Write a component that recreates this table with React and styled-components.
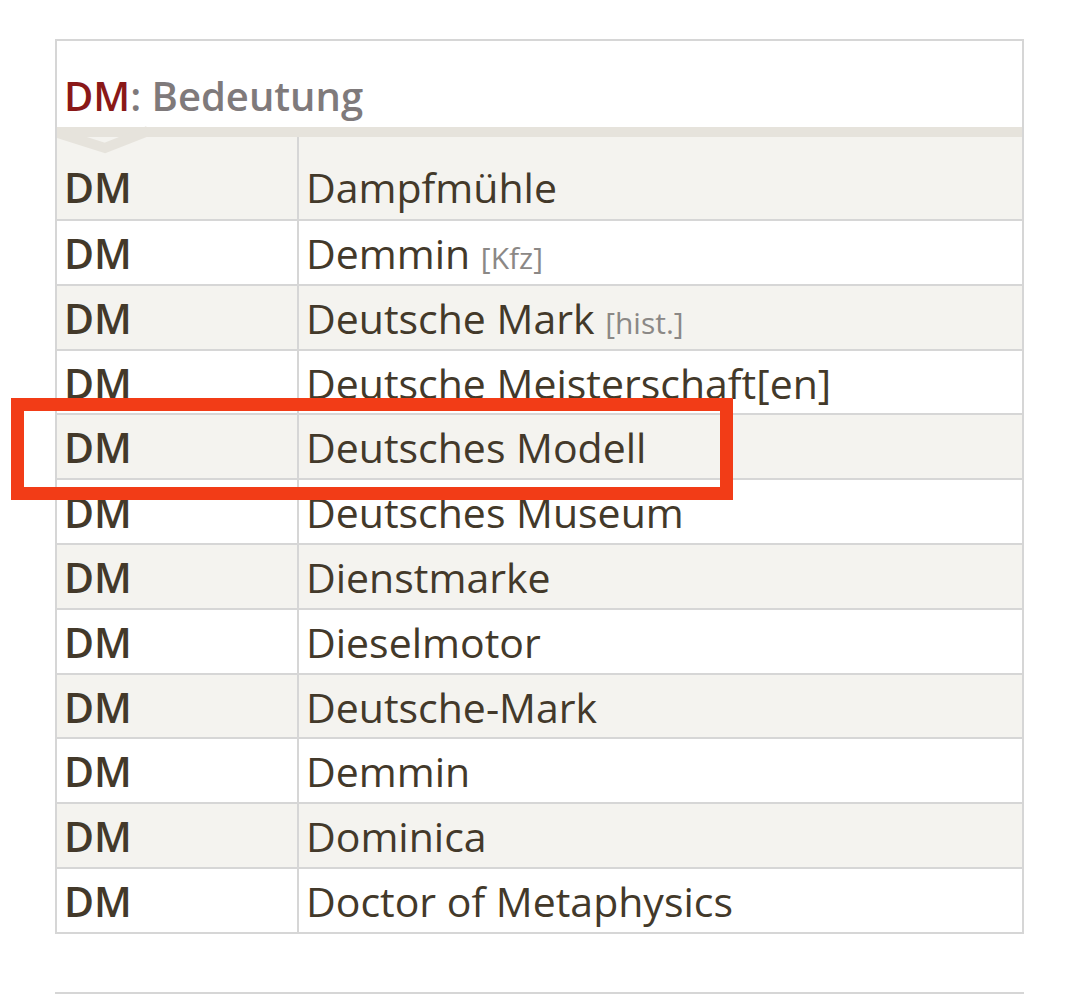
import React from 'react';
import styled, { createGlobalStyle } from 'styled-components';

const GlobalStyle = createGlobalStyle`
  body {
    margin: 0;
    background: #ffffff;
    font-family: "Open Sans", "Noto Sans", sans-serif;
    color: #43392a;
  }
`;

const Page = styled.div`
  position: relative;
  padding: 39px 56px 0 55px;
  height: 994px;
  box-sizing: border-box;
  overflow: hidden;
`;

const Card = styled.section`
  position: relative;
  width: 969px;
  border: 2px solid #d6d6d6;
  box-sizing: border-box;
`;

const Title = styled.h2`
  margin: 0;
  padding: 31px 7px 7px;
  font-size: 40px;
  line-height: 48px;
  font-weight: 600;
  color: #7f7a7b;
  border-bottom: 10px solid #e6e3dc;
`;

const Abbr = styled.span`
  color: #8a1818;
`;

const Notch = styled.svg`
  position: absolute;
  left: 0;
  top: 0;
  width: 110px;
  height: 130px;
  pointer-events: none;
`;

const Row = styled.div`
  display: grid;
  grid-template-columns: 242px 1fr;
  background: ${({ $odd }) => ($odd ? '#f4f3ef' : '#ffffff')};
  border-top: ${({ $first }) => ($first ? 'none' : '2px solid #d6d6d6')};
  height: ${({ $first }) => ($first ? '82px' : '62.8px')};
`;

const KeyCell = styled.div`
  padding: ${({ $first }) => ($first ? '19px 7px 0' : '1px 7px 0')};
  border-right: 2px solid #d6d6d6;
  font-size: 41px;
  line-height: 62.8px;
  font-weight: 600;
  white-space: nowrap;
`;

const ValueCell = styled.div`
  padding: ${({ $first }) => ($first ? '19px 7px 0' : '1px 7px 0')};
  font-size: 41px;
  line-height: 62.8px;
  font-weight: 400;
  white-space: nowrap;
`;

const Note = styled.span`
  font-size: 30px;
  color: #8b8886;
`;

const NextCard = styled.div`
  margin-top: 58px;
  width: 969px;
  height: 40px;
  border: 2px solid #d6d6d6;
  border-bottom: none;
  box-sizing: border-box;
`;

const Highlight = styled.div`
  position: absolute;
  left: 11px;
  top: 398px;
  width: 722px;
  height: 102px;
  border: 13px solid #f23c17;
  box-sizing: border-box;
  pointer-events: none;
`;

const rows = [
  { text: 'Dampfmühle' },
  { text: 'Demmin', note: '[Kfz]' },
  { text: 'Deutsche Mark', note: '[hist.]' },
  { text: 'Deutsche Meisterschaft[en]' },
  { text: 'Deutsches Modell' },
  { text: 'Deutsches Museum' },
  { text: 'Dienstmarke' },
  { text: 'Dieselmotor' },
  { text: 'Deutsche-Mark' },
  { text: 'Demmin' },
  { text: 'Dominica' },
  { text: 'Doctor of Metaphysics' },
];

export default function App() {
  return (
    <Page>
      <GlobalStyle />
      <Card>
        <Title>
          <Abbr>DM</Abbr>: Bedeutung
        </Title>
        {rows.map((row, i) => (
          <Row key={i} $odd={i % 2 === 0} $first={i === 0}>
            <KeyCell $first={i === 0}>DM</KeyCell>
            <ValueCell $first={i === 0}>
              {row.text}
              {row.note && (
                <>
                  {' '}
                  <Note>{row.note}</Note>
                </>
              )}
            </ValueCell>
          </Row>
        ))}
        <Notch viewBox="0 0 110 130">
          <polyline
            points="-12,88 48,107 91,90"
            fill="none"
            stroke="#e6e3dc"
            strokeWidth="10"
            strokeLinejoin="miter"
          />
        </Notch>
      </Card>
      <NextCard />
      <Highlight />
    </Page>
  );
}
